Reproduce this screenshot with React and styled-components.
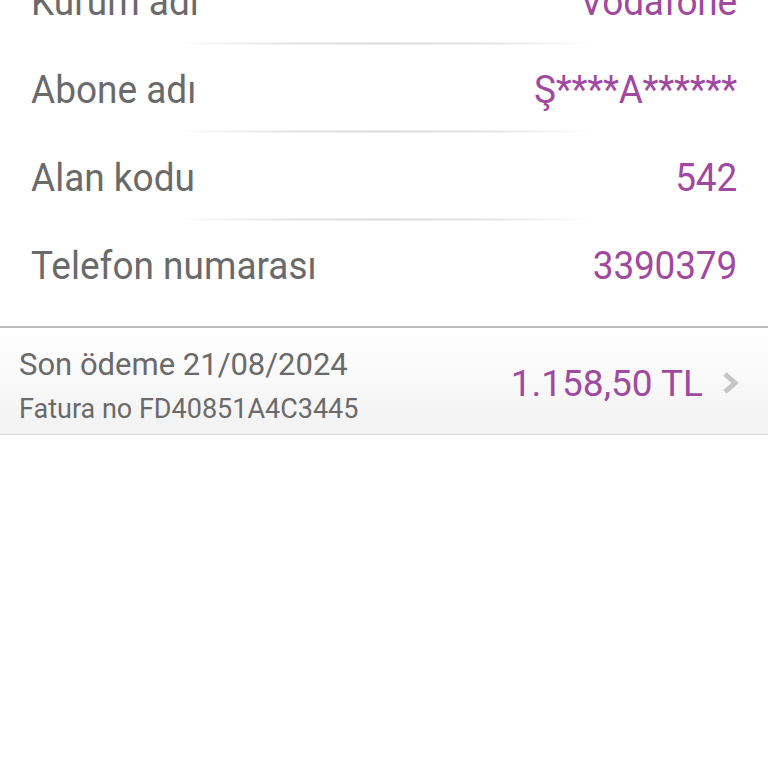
import React from "react";
import styled, { createGlobalStyle } from "styled-components";

const Global = createGlobalStyle`
  html, body { margin: 0; padding: 0; background: #ffffff; }
  body { font-family: Roboto, "Noto Sans", "Liberation Sans", sans-serif; overflow: hidden; }
`;

const Page = styled.div`
  width: 768px;
  height: 768px;
  overflow: hidden;
  background: #ffffff;
`;

const List = styled.div`
  margin-top: -44px;
  padding-bottom: 19px;
`;

const Row = styled.div`
  height: 87px;
  box-sizing: border-box;
  padding: 4px 31px 0;
  display: flex;
  align-items: center;
  justify-content: space-between;
`;

const Label = styled.span`
  display: inline-block;
  font-size: 37px;
  color: #6a6a6a;
  transform: scaleY(1.05);
`;

const Value = styled.span`
  display: inline-block;
  font-size: 37px;
  color: #a04a9f;
  letter-spacing: -0.2px;
  transform: scaleY(1.05);
`;

const Divider = styled.div`
  height: 2px;
  width: 420px;
  margin: 0 auto 0 175px;
  background: linear-gradient(90deg, rgba(225,225,225,0) 0%, #e0e0e0 30%, #dadada 50%, #e0e0e0 70%, rgba(225,225,225,0) 100%);
  transform: translateY(-0.5px);
  margin-bottom: -1px;
`;

const Bar = styled.div`
  display: flex;
  align-items: center;
  justify-content: space-between;
  border-top: 2px solid #bdbdbd;
  border-bottom: 1px solid #d9d9d9;
  background: linear-gradient(180deg, #ffffff 0%, #f2f2f2 100%);
  padding: 0 30px 0 19px;
  height: 106px;
  box-sizing: content-box;
`;

const Info = styled.div`
  display: flex;
  flex-direction: column;
  padding: 16px 0 2px;
`;

const DueLine = styled.div`
  font-size: 31px;
  line-height: 42px;
  color: #6a6a6a;
`;

const InvoiceLine = styled.div`
  font-size: 27px;
  line-height: 46px;
  color: #6a6a6a;
`;

const Amount = styled.div`
  display: flex;
  align-items: center;
  gap: 19px;
  font-size: 37px;
  color: #a04a9f;
  padding-top: 4px;
`;

const Chevron = () => (
  <svg width="16" height="22" viewBox="0 0 16 22" aria-hidden="true">
    <polyline points="3,2 13,11 3,20" fill="none" stroke="#c6c6c6" strokeWidth="5" strokeLinejoin="miter" />
  </svg>
);

const rows = [
  ["Kurum adı", "Vodafone"],
  ["Abone adı", "Ş****A******"],
  ["Alan kodu", "542"],
  ["Telefon numarası", "3390379"],
];

export default function App() {
  return (
    <Page>
      <Global />
      <List>
        {rows.map(([l, v], i) => (
          <React.Fragment key={l}>
            {i > 0 && <Divider />}
            <Row>
              <Label>{l}</Label>
              <Value>{v}</Value>
            </Row>
          </React.Fragment>
        ))}
      </List>
      <Bar>
        <Info>
          <DueLine>Son ödeme 21/08/2024</DueLine>
          <InvoiceLine>Fatura no FD40851A4C3445</InvoiceLine>
        </Info>
        <Amount>
          1.158,50 TL
          <Chevron />
        </Amount>
      </Bar>
    </Page>
  );
}
